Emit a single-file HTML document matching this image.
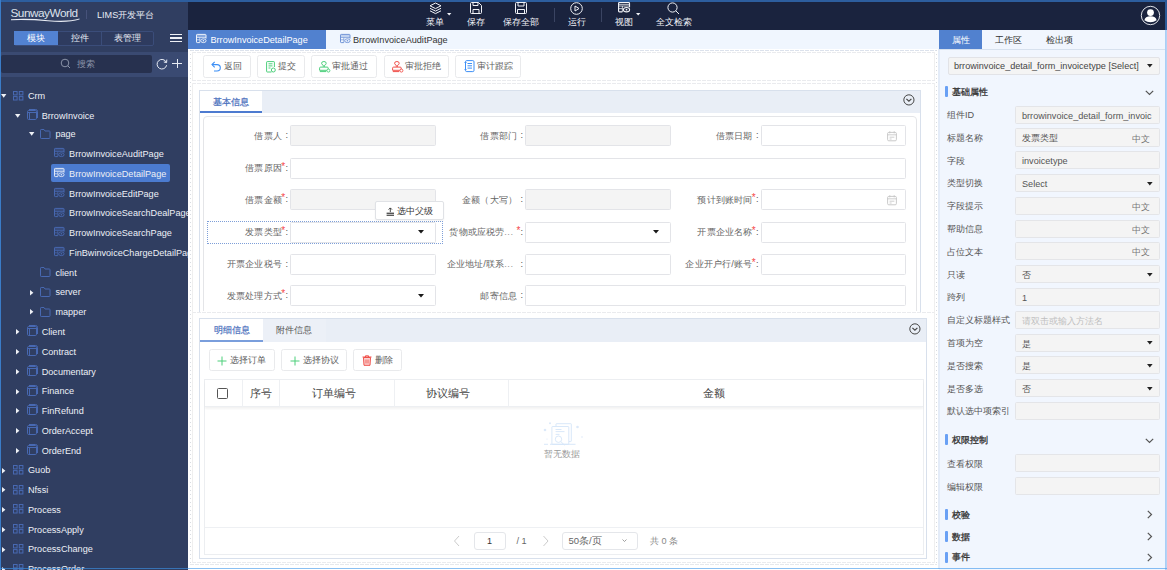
<!DOCTYPE html><html><head><meta charset="utf-8"><style>
*{box-sizing:border-box;margin:0;padding:0}
html,body{width:1167px;height:570px;overflow:hidden;background:#fff;font-family:"Liberation Sans",sans-serif;font-size:9.12px;color:#333}
.a{position:absolute}
.nw{white-space:nowrap}
svg{position:absolute;overflow:visible}
</style></head><body><div class="a" style="left:0;top:0;width:188px;height:570px;background:#303e61"></div>
<div class="a" style="left:188px;top:0;width:979px;height:30px;background:#1a233e"></div>
<div class="a nw" style="left:10.5px;top:7px;font-size:11.8px;line-height:13px;color:#dde2ec;letter-spacing:-0.5px">SunwayWorld</div>
<svg style="left:10px;top:17px" width="72" height="6"><path d="M1 2.2 Q20 1.2 38 3.2 Q58 5 69.5 1.6 L69.5 2.6 Q58 6.2 38 4.3 Q20 2.6 1 3.2 Z" fill="#e6eaf2"/></svg>
<div class="a" style="left:85.5px;top:10px;width:1px;height:9px;background:#46527a"></div>
<div class="a nw" style="left:97px;top:9px;font-size:9.12px;color:#e8ecf4">LIMS开发平台</div>
<div class="a" style="left:14px;top:30.5px;width:140px;height:15px;border:1px solid #3b4d7a;border-radius:2px;background:#2e3b5f"></div>
<div class="a" style="left:14px;top:31px;width:44px;height:14px;background:#5282d2"></div>
<div class="a" style="left:100.5px;top:31px;width:1px;height:14px;background:#3b4d7a"></div>
<div class="a nw" style="left:14px;top:31px;width:44px;height:14px;line-height:14px;text-align:center;color:#fff;font-size:9.12px">模块</div>
<div class="a nw" style="left:58px;top:31px;width:43px;height:14px;line-height:14px;text-align:center;color:#e8ecf4;font-size:9.12px">控件</div>
<div class="a nw" style="left:101px;top:31px;width:53px;height:14px;line-height:14px;text-align:center;color:#e8ecf4;font-size:9.12px">表管理</div>
<div class="a" style="left:170px;top:33.5px;width:11.6px;height:1.3px;background:#eef0f5"></div>
<div class="a" style="left:170px;top:37.3px;width:11.6px;height:1.3px;background:#eef0f5"></div>
<div class="a" style="left:170px;top:41.1px;width:11.6px;height:1.3px;background:#eef0f5"></div>
<div class="a" style="left:0;top:51.5px;width:188px;height:25px;background:#3a4a72"></div>
<div class="a" style="left:1px;top:55px;width:151px;height:18px;background:#27314f;border-radius:2px"></div>
<svg style="left:60px;top:58px" width="12" height="12"><circle cx="5" cy="5" r="3.8" stroke="#8a93a8" stroke-width="1" fill="none"/><path d="M7.8 7.8 L10 10" stroke="#8a93a8" stroke-width="1"/></svg>
<div class="a nw" style="left:77px;top:58px;color:#8a93a8;font-size:9.12px">搜索</div>
<svg style="left:156px;top:57.5px" width="12" height="12"><path d="M10.3 4.3 A4.8 4.8 0 1 0 10.6 7.2" stroke="#e8ecf4" stroke-width="1" fill="none"/><path d="M10.8 1.6 L10.6 4.6 L7.8 4" stroke="#e8ecf4" stroke-width="1" fill="none"/></svg>
<div class="a" style="left:176.7px;top:58.8px;width:1px;height:9.6px;background:#e8ecf4"></div>
<div class="a" style="left:172.3px;top:63px;width:9.8px;height:1px;background:#e8ecf4"></div>
<div class="a" style="left:0;top:77px;width:188px;height:493px;overflow:hidden">
<svg style="left:1.40px;top:17.00px" width="6" height="4"><path d="M0 0 H5.4 L2.7 3.7 Z" fill="#eef1f6"/></svg>
<svg style="left:13.0px;top:13.800000000000006px" width="11" height="10"><rect x="0.5" y="0.5" width="3.6" height="3.4" rx="0" stroke="#4869b2" stroke-width="1" fill="none"/><rect x="0.5" y="5.6" width="3.6" height="3.4" rx="0" stroke="#4869b2" stroke-width="1" fill="none"/><rect x="6.3" y="0.5" width="3.6" height="3.4" rx="0" stroke="#4869b2" stroke-width="1" fill="none"/><rect x="6.3" y="5.6" width="3.6" height="3.4" rx="0" stroke="#4869b2" stroke-width="1" fill="none"/></svg>
<div class="a nw" style="left:28.00px;top:13.40px;color:#edf0f6;font-size:9.12px;line-height:12px">Crm</div>
<svg style="left:15.10px;top:36.50px" width="6" height="4"><path d="M0 0 H5.4 L2.7 3.7 Z" fill="#eef1f6"/></svg>
<svg style="left:26.7px;top:32.2px" width="11" height="11"><rect x="0.5" y="1.5" width="9" height="9" rx="1.2" stroke="#4869b2" stroke-width="1" fill="none"/><path d="M0.5 3.5 H9.5 M2.5 3.5 V10.5 M2 0.5 H8.5 Q10.5 0.5 10.5 2.5 V9" stroke="#4869b2" stroke-width="1" fill="none"/></svg>
<div class="a nw" style="left:41.70px;top:32.90px;color:#edf0f6;font-size:9.12px;line-height:12px">BrrowInvoice</div>
<svg style="left:28.80px;top:54.80px" width="6" height="4"><path d="M0 0 H5.4 L2.7 3.7 Z" fill="#eef1f6"/></svg>
<svg style="left:40.4px;top:51.69999999999999px" width="11" height="10"><path d="M0.5 1.2 Q0.5 0.5 1.2 0.5 H4 L5 2 H9.3 Q10 2 10 2.7 V8.8 Q10 9.5 9.3 9.5 H1.2 Q0.5 9.5 0.5 8.8 Z" stroke="#4869b2" stroke-width="1" fill="none"/></svg>
<div class="a nw" style="left:55.40px;top:51.20px;color:#edf0f6;font-size:9.12px;line-height:12px">page</div>
<svg style="left:54.099999999999994px;top:71.175px" width="11" height="10"><path d="M3.8 8.6 H1.2 Q0.5 8.6 0.5 7.9 V1.1 Q0.5 0.4 1.2 0.4 H9.3 Q10 0.4 10 1.1 V4.6" stroke="#4869b2" stroke-width="1" fill="none"/><path d="M0.5 2.0 H10 M0.5 3.5 H10 M3.8 3.5 V8.6 M0.5 5.8 H3.8" stroke="#4869b2" stroke-width="0.7" fill="none"/><ellipse cx="7.4" cy="6.7" rx="2.7" ry="1.9" stroke="#4869b2" stroke-width="0.9" fill="none"/><circle cx="7.4" cy="6.7" r="0.8" fill="#4869b2"/></svg>
<div class="a nw" style="left:69.10px;top:70.97px;color:#edf0f6;font-size:9.12px;line-height:12px">BrrowInvoiceAuditPage</div>
<div class="a" style="left:51px;top:87.30px;width:119px;height:18.2px;background:#4b7bd0;border-radius:2px"></div>
<svg style="left:54.099999999999994px;top:90.95px" width="11" height="10"><path d="M3.8 8.6 H1.2 Q0.5 8.6 0.5 7.9 V1.1 Q0.5 0.4 1.2 0.4 H9.3 Q10 0.4 10 1.1 V4.6" stroke="#e3e9f6" stroke-width="1" fill="none"/><path d="M0.5 2.0 H10 M0.5 3.5 H10 M3.8 3.5 V8.6 M0.5 5.8 H3.8" stroke="#e3e9f6" stroke-width="0.7" fill="none"/><ellipse cx="7.4" cy="6.7" rx="2.7" ry="1.9" stroke="#e3e9f6" stroke-width="0.9" fill="none"/><circle cx="7.4" cy="6.7" r="0.8" fill="#e3e9f6"/></svg>
<div class="a nw" style="left:69.10px;top:90.75px;color:#edf0f6;font-size:9.12px;line-height:12px">BrrowInvoiceDetailPage</div>
<svg style="left:54.099999999999994px;top:110.72499999999998px" width="11" height="10"><path d="M3.8 8.6 H1.2 Q0.5 8.6 0.5 7.9 V1.1 Q0.5 0.4 1.2 0.4 H9.3 Q10 0.4 10 1.1 V4.6" stroke="#4869b2" stroke-width="1" fill="none"/><path d="M0.5 2.0 H10 M0.5 3.5 H10 M3.8 3.5 V8.6 M0.5 5.8 H3.8" stroke="#4869b2" stroke-width="0.7" fill="none"/><ellipse cx="7.4" cy="6.7" rx="2.7" ry="1.9" stroke="#4869b2" stroke-width="0.9" fill="none"/><circle cx="7.4" cy="6.7" r="0.8" fill="#4869b2"/></svg>
<div class="a nw" style="left:69.10px;top:110.52px;color:#edf0f6;font-size:9.12px;line-height:12px">BrrowInvoiceEditPage</div>
<svg style="left:54.099999999999994px;top:130.49999999999997px" width="11" height="10"><path d="M3.8 8.6 H1.2 Q0.5 8.6 0.5 7.9 V1.1 Q0.5 0.4 1.2 0.4 H9.3 Q10 0.4 10 1.1 V4.6" stroke="#4869b2" stroke-width="1" fill="none"/><path d="M0.5 2.0 H10 M0.5 3.5 H10 M3.8 3.5 V8.6 M0.5 5.8 H3.8" stroke="#4869b2" stroke-width="0.7" fill="none"/><ellipse cx="7.4" cy="6.7" rx="2.7" ry="1.9" stroke="#4869b2" stroke-width="0.9" fill="none"/><circle cx="7.4" cy="6.7" r="0.8" fill="#4869b2"/></svg>
<div class="a nw" style="left:69.10px;top:130.30px;color:#edf0f6;font-size:9.12px;line-height:12px">BrrowInvoiceSearchDealPage</div>
<svg style="left:54.099999999999994px;top:150.27499999999998px" width="11" height="10"><path d="M3.8 8.6 H1.2 Q0.5 8.6 0.5 7.9 V1.1 Q0.5 0.4 1.2 0.4 H9.3 Q10 0.4 10 1.1 V4.6" stroke="#4869b2" stroke-width="1" fill="none"/><path d="M0.5 2.0 H10 M0.5 3.5 H10 M3.8 3.5 V8.6 M0.5 5.8 H3.8" stroke="#4869b2" stroke-width="0.7" fill="none"/><ellipse cx="7.4" cy="6.7" rx="2.7" ry="1.9" stroke="#4869b2" stroke-width="0.9" fill="none"/><circle cx="7.4" cy="6.7" r="0.8" fill="#4869b2"/></svg>
<div class="a nw" style="left:69.10px;top:150.07px;color:#edf0f6;font-size:9.12px;line-height:12px">BrrowInvoiceSearchPage</div>
<svg style="left:54.099999999999994px;top:170.04999999999995px" width="11" height="10"><path d="M3.8 8.6 H1.2 Q0.5 8.6 0.5 7.9 V1.1 Q0.5 0.4 1.2 0.4 H9.3 Q10 0.4 10 1.1 V4.6" stroke="#4869b2" stroke-width="1" fill="none"/><path d="M0.5 2.0 H10 M0.5 3.5 H10 M3.8 3.5 V8.6 M0.5 5.8 H3.8" stroke="#4869b2" stroke-width="0.7" fill="none"/><ellipse cx="7.4" cy="6.7" rx="2.7" ry="1.9" stroke="#4869b2" stroke-width="0.9" fill="none"/><circle cx="7.4" cy="6.7" r="0.8" fill="#4869b2"/></svg>
<div class="a nw" style="left:69.10px;top:169.85px;color:#edf0f6;font-size:9.12px;line-height:12px">FinBwinvoiceChargeDetailPage</div>
<svg style="left:40.4px;top:190.125px" width="11" height="10"><path d="M0.5 1.2 Q0.5 0.5 1.2 0.5 H4 L5 2 H9.3 Q10 2 10 2.7 V8.8 Q10 9.5 9.3 9.5 H1.2 Q0.5 9.5 0.5 8.8 Z" stroke="#4869b2" stroke-width="1" fill="none"/></svg>
<div class="a nw" style="left:55.40px;top:189.62px;color:#edf0f6;font-size:9.12px;line-height:12px">client</div>
<svg style="left:29.60px;top:212.70px" width="4" height="6"><path d="M0 0 V5.4 L3.4 2.7 Z" fill="#eef1f6"/></svg>
<svg style="left:40.4px;top:209.89999999999998px" width="11" height="10"><path d="M0.5 1.2 Q0.5 0.5 1.2 0.5 H4 L5 2 H9.3 Q10 2 10 2.7 V8.8 Q10 9.5 9.3 9.5 H1.2 Q0.5 9.5 0.5 8.8 Z" stroke="#4869b2" stroke-width="1" fill="none"/></svg>
<div class="a nw" style="left:55.40px;top:209.40px;color:#edf0f6;font-size:9.12px;line-height:12px">server</div>
<svg style="left:29.60px;top:232.47px" width="4" height="6"><path d="M0 0 V5.4 L3.4 2.7 Z" fill="#eef1f6"/></svg>
<svg style="left:40.4px;top:229.67499999999995px" width="11" height="10"><path d="M0.5 1.2 Q0.5 0.5 1.2 0.5 H4 L5 2 H9.3 Q10 2 10 2.7 V8.8 Q10 9.5 9.3 9.5 H1.2 Q0.5 9.5 0.5 8.8 Z" stroke="#4869b2" stroke-width="1" fill="none"/></svg>
<div class="a nw" style="left:55.40px;top:229.17px;color:#edf0f6;font-size:9.12px;line-height:12px">mapper</div>
<svg style="left:15.90px;top:252.25px" width="4" height="6"><path d="M0 0 V5.4 L3.4 2.7 Z" fill="#eef1f6"/></svg>
<svg style="left:26.7px;top:248.25px" width="11" height="11"><rect x="0.5" y="1.5" width="9" height="9" rx="1.2" stroke="#4869b2" stroke-width="1" fill="none"/><path d="M0.5 3.5 H9.5 M2.5 3.5 V10.5 M2 0.5 H8.5 Q10.5 0.5 10.5 2.5 V9" stroke="#4869b2" stroke-width="1" fill="none"/></svg>
<div class="a nw" style="left:41.70px;top:248.95px;color:#edf0f6;font-size:9.12px;line-height:12px">Client</div>
<svg style="left:15.90px;top:272.02px" width="4" height="6"><path d="M0 0 V5.4 L3.4 2.7 Z" fill="#eef1f6"/></svg>
<svg style="left:26.7px;top:268.025px" width="11" height="11"><rect x="0.5" y="1.5" width="9" height="9" rx="1.2" stroke="#4869b2" stroke-width="1" fill="none"/><path d="M0.5 3.5 H9.5 M2.5 3.5 V10.5 M2 0.5 H8.5 Q10.5 0.5 10.5 2.5 V9" stroke="#4869b2" stroke-width="1" fill="none"/></svg>
<div class="a nw" style="left:41.70px;top:268.72px;color:#edf0f6;font-size:9.12px;line-height:12px">Contract</div>
<svg style="left:15.90px;top:291.80px" width="4" height="6"><path d="M0 0 V5.4 L3.4 2.7 Z" fill="#eef1f6"/></svg>
<svg style="left:26.7px;top:287.8px" width="11" height="11"><rect x="0.5" y="1.5" width="9" height="9" rx="1.2" stroke="#4869b2" stroke-width="1" fill="none"/><path d="M0.5 3.5 H9.5 M2.5 3.5 V10.5 M2 0.5 H8.5 Q10.5 0.5 10.5 2.5 V9" stroke="#4869b2" stroke-width="1" fill="none"/></svg>
<div class="a nw" style="left:41.70px;top:288.50px;color:#edf0f6;font-size:9.12px;line-height:12px">Documentary</div>
<svg style="left:15.90px;top:311.57px" width="4" height="6"><path d="M0 0 V5.4 L3.4 2.7 Z" fill="#eef1f6"/></svg>
<svg style="left:26.7px;top:307.575px" width="11" height="11"><rect x="0.5" y="1.5" width="9" height="9" rx="1.2" stroke="#4869b2" stroke-width="1" fill="none"/><path d="M0.5 3.5 H9.5 M2.5 3.5 V10.5 M2 0.5 H8.5 Q10.5 0.5 10.5 2.5 V9" stroke="#4869b2" stroke-width="1" fill="none"/></svg>
<div class="a nw" style="left:41.70px;top:308.27px;color:#edf0f6;font-size:9.12px;line-height:12px">Finance</div>
<svg style="left:15.90px;top:331.35px" width="4" height="6"><path d="M0 0 V5.4 L3.4 2.7 Z" fill="#eef1f6"/></svg>
<svg style="left:26.7px;top:327.34999999999997px" width="11" height="11"><rect x="0.5" y="1.5" width="9" height="9" rx="1.2" stroke="#4869b2" stroke-width="1" fill="none"/><path d="M0.5 3.5 H9.5 M2.5 3.5 V10.5 M2 0.5 H8.5 Q10.5 0.5 10.5 2.5 V9" stroke="#4869b2" stroke-width="1" fill="none"/></svg>
<div class="a nw" style="left:41.70px;top:328.05px;color:#edf0f6;font-size:9.12px;line-height:12px">FinRefund</div>
<svg style="left:15.90px;top:351.12px" width="4" height="6"><path d="M0 0 V5.4 L3.4 2.7 Z" fill="#eef1f6"/></svg>
<svg style="left:26.7px;top:347.125px" width="11" height="11"><rect x="0.5" y="1.5" width="9" height="9" rx="1.2" stroke="#4869b2" stroke-width="1" fill="none"/><path d="M0.5 3.5 H9.5 M2.5 3.5 V10.5 M2 0.5 H8.5 Q10.5 0.5 10.5 2.5 V9" stroke="#4869b2" stroke-width="1" fill="none"/></svg>
<div class="a nw" style="left:41.70px;top:347.82px;color:#edf0f6;font-size:9.12px;line-height:12px">OrderAccept</div>
<svg style="left:15.90px;top:370.90px" width="4" height="6"><path d="M0 0 V5.4 L3.4 2.7 Z" fill="#eef1f6"/></svg>
<svg style="left:26.7px;top:366.9px" width="11" height="11"><rect x="0.5" y="1.5" width="9" height="9" rx="1.2" stroke="#4869b2" stroke-width="1" fill="none"/><path d="M0.5 3.5 H9.5 M2.5 3.5 V10.5 M2 0.5 H8.5 Q10.5 0.5 10.5 2.5 V9" stroke="#4869b2" stroke-width="1" fill="none"/></svg>
<div class="a nw" style="left:41.70px;top:367.60px;color:#edf0f6;font-size:9.12px;line-height:12px">OrderEnd</div>
<svg style="left:2.20px;top:390.67px" width="4" height="6"><path d="M0 0 V5.4 L3.4 2.7 Z" fill="#eef1f6"/></svg>
<svg style="left:13.0px;top:387.7749999999999px" width="11" height="10"><rect x="0.5" y="0.5" width="3.6" height="3.4" rx="0" stroke="#4869b2" stroke-width="1" fill="none"/><rect x="0.5" y="5.6" width="3.6" height="3.4" rx="0" stroke="#4869b2" stroke-width="1" fill="none"/><rect x="6.3" y="0.5" width="3.6" height="3.4" rx="0" stroke="#4869b2" stroke-width="1" fill="none"/><rect x="6.3" y="5.6" width="3.6" height="3.4" rx="0" stroke="#4869b2" stroke-width="1" fill="none"/></svg>
<div class="a nw" style="left:28.00px;top:387.37px;color:#edf0f6;font-size:9.12px;line-height:12px">Guob</div>
<svg style="left:2.20px;top:410.45px" width="4" height="6"><path d="M0 0 V5.4 L3.4 2.7 Z" fill="#eef1f6"/></svg>
<svg style="left:13.0px;top:407.54999999999995px" width="11" height="10"><rect x="0.5" y="0.5" width="3.6" height="3.4" rx="0" stroke="#4869b2" stroke-width="1" fill="none"/><rect x="0.5" y="5.6" width="3.6" height="3.4" rx="0" stroke="#4869b2" stroke-width="1" fill="none"/><rect x="6.3" y="0.5" width="3.6" height="3.4" rx="0" stroke="#4869b2" stroke-width="1" fill="none"/><rect x="6.3" y="5.6" width="3.6" height="3.4" rx="0" stroke="#4869b2" stroke-width="1" fill="none"/></svg>
<div class="a nw" style="left:28.00px;top:407.15px;color:#edf0f6;font-size:9.12px;line-height:12px">Nfssi</div>
<svg style="left:2.20px;top:430.22px" width="4" height="6"><path d="M0 0 V5.4 L3.4 2.7 Z" fill="#eef1f6"/></svg>
<svg style="left:13.0px;top:427.32499999999993px" width="11" height="10"><rect x="0.5" y="0.5" width="3.6" height="3.4" rx="0" stroke="#4869b2" stroke-width="1" fill="none"/><rect x="0.5" y="5.6" width="3.6" height="3.4" rx="0" stroke="#4869b2" stroke-width="1" fill="none"/><rect x="6.3" y="0.5" width="3.6" height="3.4" rx="0" stroke="#4869b2" stroke-width="1" fill="none"/><rect x="6.3" y="5.6" width="3.6" height="3.4" rx="0" stroke="#4869b2" stroke-width="1" fill="none"/></svg>
<div class="a nw" style="left:28.00px;top:426.92px;color:#edf0f6;font-size:9.12px;line-height:12px">Process</div>
<svg style="left:2.20px;top:450.00px" width="4" height="6"><path d="M0 0 V5.4 L3.4 2.7 Z" fill="#eef1f6"/></svg>
<svg style="left:13.0px;top:447.1px" width="11" height="10"><rect x="0.5" y="0.5" width="3.6" height="3.4" rx="0" stroke="#4869b2" stroke-width="1" fill="none"/><rect x="0.5" y="5.6" width="3.6" height="3.4" rx="0" stroke="#4869b2" stroke-width="1" fill="none"/><rect x="6.3" y="0.5" width="3.6" height="3.4" rx="0" stroke="#4869b2" stroke-width="1" fill="none"/><rect x="6.3" y="5.6" width="3.6" height="3.4" rx="0" stroke="#4869b2" stroke-width="1" fill="none"/></svg>
<div class="a nw" style="left:28.00px;top:446.70px;color:#edf0f6;font-size:9.12px;line-height:12px">ProcessApply</div>
<svg style="left:2.20px;top:469.77px" width="4" height="6"><path d="M0 0 V5.4 L3.4 2.7 Z" fill="#eef1f6"/></svg>
<svg style="left:13.0px;top:466.8749999999999px" width="11" height="10"><rect x="0.5" y="0.5" width="3.6" height="3.4" rx="0" stroke="#4869b2" stroke-width="1" fill="none"/><rect x="0.5" y="5.6" width="3.6" height="3.4" rx="0" stroke="#4869b2" stroke-width="1" fill="none"/><rect x="6.3" y="0.5" width="3.6" height="3.4" rx="0" stroke="#4869b2" stroke-width="1" fill="none"/><rect x="6.3" y="5.6" width="3.6" height="3.4" rx="0" stroke="#4869b2" stroke-width="1" fill="none"/></svg>
<div class="a nw" style="left:28.00px;top:466.47px;color:#edf0f6;font-size:9.12px;line-height:12px">ProcessChange</div>
<svg style="left:2.20px;top:489.55px" width="4" height="6"><path d="M0 0 V5.4 L3.4 2.7 Z" fill="#eef1f6"/></svg>
<svg style="left:13.0px;top:486.65px" width="11" height="10"><rect x="0.5" y="0.5" width="3.6" height="3.4" rx="0" stroke="#4869b2" stroke-width="1" fill="none"/><rect x="0.5" y="5.6" width="3.6" height="3.4" rx="0" stroke="#4869b2" stroke-width="1" fill="none"/><rect x="6.3" y="0.5" width="3.6" height="3.4" rx="0" stroke="#4869b2" stroke-width="1" fill="none"/><rect x="6.3" y="5.6" width="3.6" height="3.4" rx="0" stroke="#4869b2" stroke-width="1" fill="none"/></svg>
<div class="a nw" style="left:28.00px;top:486.25px;color:#edf0f6;font-size:9.12px;line-height:12px">ProcessOrder</div>
</div>
<svg style="left:429px;top:1.5px" width="13" height="13"><path d="M6.5 1 L12 3.8 L6.5 6.6 L1 3.8 Z" stroke="#f0f2f7" stroke-width="1" fill="none"/><path d="M1 6.3 L6.5 9.1 L12 6.3 M1 8.8 L6.5 11.6 L12 8.8" stroke="#f0f2f7" stroke-width="1" fill="none"/></svg>
<div class="a nw" style="left:426px;top:16.5px;color:#f0f2f7;font-size:9.12px;line-height:10px">菜单</div>
<svg style="left:447px;top:13px" width="5" height="4"><path d="M0 0 H4.4 L2.2 2.6 Z" fill="#f0f2f7"/></svg>
<svg style="left:470px;top:2px" width="12" height="12"><path d="M1.5 0.5 H8.5 L11.5 3.5 V10.5 Q11.5 11.5 10.5 11.5 H1.5 Q0.5 11.5 0.5 10.5 V1.5 Q0.5 0.5 1.5 0.5 Z" stroke="#f0f2f7" stroke-width="1" fill="none"/><path d="M3 0.5 V3.5 H8 V0.5 M3 11.5 V7.5 H9 V11.5" stroke="#f0f2f7" stroke-width="1" fill="none"/></svg>
<div class="a nw" style="left:467px;top:16.5px;color:#f0f2f7;font-size:9.12px;line-height:10px">保存</div>
<svg style="left:514.5px;top:2px" width="12" height="12"><rect x="0.5" y="0.5" width="11" height="11" rx="1" stroke="#f0f2f7" stroke-width="1" fill="none"/><path d="M3 0.5 V4 H9 V0.5 M2.5 11.5 V7.5 H9.5 V11.5" stroke="#f0f2f7" stroke-width="1" fill="none"/></svg>
<div class="a nw" style="left:503px;top:16.5px;color:#f0f2f7;font-size:9.12px;line-height:10px">保存全部</div>
<div class="a" style="left:553.5px;top:8px;width:1px;height:14px;background:#3a4462"></div>
<svg style="left:570px;top:1.5px" width="13" height="13"><circle cx="6.5" cy="6.5" r="5.8" stroke="#f0f2f7" stroke-width="1" fill="none"/><path d="M5 4 L9 6.5 L5 9 Z" stroke="#f0f2f7" stroke-width="1" fill="none" stroke-linejoin="round"/></svg>
<div class="a nw" style="left:568px;top:16.5px;color:#f0f2f7;font-size:9.12px;line-height:10px">运行</div>
<div class="a" style="left:600.5px;top:8px;width:1px;height:14px;background:#3a4462"></div>
<svg style="left:618px;top:2px;transform:scale(1.15);transform-origin:0 0" width="11" height="10" ><path d="M3.8 8.6 H1.2 Q0.5 8.6 0.5 7.9 V1.1 Q0.5 0.4 1.2 0.4 H9.3 Q10 0.4 10 1.1 V4.6" stroke="#f0f2f7" stroke-width="1" fill="none"/><path d="M0.5 2.0 H10 M0.5 3.5 H10 M3.8 3.5 V8.6 M0.5 5.8 H3.8" stroke="#f0f2f7" stroke-width="0.7" fill="none"/><ellipse cx="7.4" cy="6.7" rx="2.7" ry="1.9" stroke="#f0f2f7" stroke-width="0.9" fill="none"/><circle cx="7.4" cy="6.7" r="0.8" fill="#f0f2f7"/></svg>
<div class="a nw" style="left:615px;top:16.5px;color:#f0f2f7;font-size:9.12px;line-height:10px">视图</div>
<svg style="left:636px;top:13px" width="5" height="4"><path d="M0 0 H4.4 L2.2 2.6 Z" fill="#f0f2f7"/></svg>
<svg style="left:667px;top:1.5px" width="13" height="13"><circle cx="5.5" cy="5.5" r="4.6" stroke="#f0f2f7" stroke-width="1" fill="none"/><path d="M8.8 8.8 L12 12" stroke="#f0f2f7" stroke-width="1"/></svg>
<div class="a nw" style="left:656px;top:16.5px;color:#f0f2f7;font-size:9.12px;line-height:10px">全文检索</div>
<svg style="left:1140px;top:5px" width="21" height="21"><circle cx="10.5" cy="10.5" r="9.2" stroke="#f4f5f8" stroke-width="0.9" fill="none"/><circle cx="10.5" cy="7.6" r="3.4" fill="#fff"/><path d="M4.4 15.2 Q5 11.3 10.5 11.3 Q16 11.3 16.6 15.2 Q14 17.3 10.5 17.3 Q7 17.3 4.4 15.2 Z" fill="#fff"/></svg>
<div class="a" style="left:188px;top:30px;width:751px;height:19px;background:#f0f6fe"></div>
<div class="a" style="left:188px;top:30px;width:138px;height:18.6px;background:#5181cf"></div>
<svg style="left:196px;top:34.2px" width="11" height="10"><path d="M3.8 8.6 H1.2 Q0.5 8.6 0.5 7.9 V1.1 Q0.5 0.4 1.2 0.4 H9.3 Q10 0.4 10 1.1 V4.6" stroke="#f0f4fb" stroke-width="1" fill="none"/><path d="M0.5 2.0 H10 M0.5 3.5 H10 M3.8 3.5 V8.6 M0.5 5.8 H3.8" stroke="#f0f4fb" stroke-width="0.7" fill="none"/><ellipse cx="7.4" cy="6.7" rx="2.7" ry="1.9" stroke="#f0f4fb" stroke-width="0.9" fill="none"/><circle cx="7.4" cy="6.7" r="0.8" fill="#f0f4fb"/></svg>
<div class="a nw" style="left:210.5px;top:34.5px;color:#fff;font-size:9.12px;line-height:11px">BrrowInvoiceDetailPage</div>
<svg style="left:340px;top:34.2px" width="11" height="10"><path d="M3.8 8.6 H1.2 Q0.5 8.6 0.5 7.9 V1.1 Q0.5 0.4 1.2 0.4 H9.3 Q10 0.4 10 1.1 V4.6" stroke="#6f93d6" stroke-width="1" fill="none"/><path d="M0.5 2.0 H10 M0.5 3.5 H10 M3.8 3.5 V8.6 M0.5 5.8 H3.8" stroke="#6f93d6" stroke-width="0.7" fill="none"/><ellipse cx="7.4" cy="6.7" rx="2.7" ry="1.9" stroke="#6f93d6" stroke-width="0.9" fill="none"/><circle cx="7.4" cy="6.7" r="0.8" fill="#6f93d6"/></svg>
<div class="a nw" style="left:353px;top:34.5px;color:#333;font-size:9.12px;line-height:11px">BrrowInvoiceAuditPage</div>
<div class="a" style="left:190px;top:49.8px;width:747px;height:1px;background:repeating-linear-gradient(to right,#dce2ec 0 4px,transparent 4px 5px)"></div>
<div class="a" style="left:190px;top:563.8px;width:747px;height:1px;background:repeating-linear-gradient(to right,#e6e8ec 0 4px,transparent 4px 5px)"></div>
<div class="a" style="left:190px;top:49.8px;width:1px;height:515px;background:repeating-linear-gradient(to bottom,#d9dce1 0 1px,transparent 1px 4px)"></div>
<div class="a" style="left:936px;top:49.8px;width:1px;height:515px;background:repeating-linear-gradient(to bottom,#d9dce1 0 1px,transparent 1px 4px)"></div>
<div class="a" style="left:192px;top:51.8px;width:743px;height:1px;background:repeating-linear-gradient(to right,#eaebee 0 4px,transparent 4px 5px)"></div>
<div class="a" style="left:192px;top:79.8px;width:743px;height:1px;background:repeating-linear-gradient(to right,#eaebee 0 4px,transparent 4px 5px)"></div>
<div class="a" style="left:192px;top:82.8px;width:743px;height:1px;background:repeating-linear-gradient(to right,#eaebee 0 4px,transparent 4px 5px)"></div>
<div class="a" style="left:192px;top:311.5px;width:743px;height:1px;background:repeating-linear-gradient(to right,#eaebee 0 4px,transparent 4px 5px)"></div>
<div class="a" style="left:192px;top:562px;width:743px;height:1px;background:repeating-linear-gradient(to right,#eaebee 0 4px,transparent 4px 5px)"></div>
<div class="a" style="left:192px;top:51.8px;width:1px;height:28px;background:#efefef"></div>
<div class="a" style="left:934px;top:51.8px;width:1px;height:28px;background:#efefef"></div>
<div class="a" style="left:192px;top:82.8px;width:1px;height:480px;background:#efefef"></div>
<div class="a" style="left:934px;top:82.8px;width:1px;height:480px;background:#efefef"></div>
<div class="a" style="left:202.5px;top:55px;width:48px;height:22.5px;border:1px solid #e9eaec;border-radius:2.5px;background:#fff"></div>
<svg style="left:211px;top:60.5px" width="11" height="11"><path d="M3.7 0.9 L1 3.6 L3.7 6.3" stroke="#3d8ff5" stroke-width="1.1" fill="none"/><path d="M1.2 3.6 H6 Q9.3 3.6 9.3 6.8 Q9.3 10 6 10 H3" stroke="#3d8ff5" stroke-width="1.1" fill="none"/></svg>
<div class="a nw" style="left:223.5px;top:60.75px;color:#606060;font-size:9.12px;line-height:11px">返回</div>
<div class="a" style="left:256.5px;top:55px;width:48px;height:22.5px;border:1px solid #e9eaec;border-radius:2.5px;background:#fff"></div>
<svg style="left:265.5px;top:60.5px" width="12" height="12"><path d="M5.5 11 H1.2 Q0.6 11 0.6 10.4 V1.2 Q0.6 0.6 1.2 0.6 H7.8 Q8.4 0.6 8.4 1.2 V6" stroke="#4ccf7b" stroke-width="1" fill="none"/><path d="M2.5 2.8 H6.5 M2.5 4.9 H6.5 M2.5 7 H4.5" stroke="#4ccf7b" stroke-width="1"/><circle cx="7.3" cy="9" r="2" stroke="#4ccf7b" stroke-width="1" fill="#fff"/></svg>
<div class="a nw" style="left:277.5px;top:60.75px;color:#606060;font-size:9.12px;line-height:11px">提交</div>
<div class="a" style="left:310.5px;top:55px;width:66px;height:22.5px;border:1px solid #e9eaec;border-radius:2.5px;background:#fff"></div>
<svg style="left:319.3px;top:60.8px" width="12" height="12"><path d="M4.3 5.8 V4.3 Q2.6 3.6 2.6 2.3 Q2.6 0.5 4.9 0.5 Q7.2 0.5 7.2 2.3 Q7.2 3.6 5.5 4.3 V5.8" stroke="#4ccf7b" stroke-width="1" fill="none"/><path d="M0.6 9.3 V7.1 Q0.6 6.1 1.6 6.1 H8.2 Q9.2 6.1 9.2 7.1 V9.3 Z" stroke="#4ccf7b" stroke-width="1" fill="none"/><path d="M0.8 10.6 H7.2" stroke="#4ccf7b" stroke-width="1"/><circle cx="9.4" cy="9.6" r="1.5" fill="#fff" stroke="#4ccf7b" stroke-width="0.9"/></svg>
<div class="a nw" style="left:332px;top:60.75px;color:#606060;font-size:9.12px;line-height:11px">审批通过</div>
<div class="a" style="left:383.5px;top:55px;width:65px;height:22.5px;border:1px solid #e9eaec;border-radius:2.5px;background:#fff"></div>
<svg style="left:392.3px;top:60.8px" width="12" height="12"><path d="M4.3 5.8 V4.3 Q2.6 3.6 2.6 2.3 Q2.6 0.5 4.9 0.5 Q7.2 0.5 7.2 2.3 Q7.2 3.6 5.5 4.3 V5.8" stroke="#f0504a" stroke-width="1" fill="none"/><path d="M0.6 9.3 V7.1 Q0.6 6.1 1.6 6.1 H8.2 Q9.2 6.1 9.2 7.1 V9.3 Z" stroke="#f0504a" stroke-width="1" fill="none"/><path d="M0.8 10.6 H7.2" stroke="#f0504a" stroke-width="1"/><circle cx="9.4" cy="9.6" r="1.5" fill="#fff" stroke="#f0504a" stroke-width="0.9"/></svg>
<div class="a nw" style="left:405px;top:60.75px;color:#606060;font-size:9.12px;line-height:11px">审批拒绝</div>
<div class="a" style="left:455.2px;top:55px;width:66px;height:22.5px;border:1px solid #e9eaec;border-radius:2.5px;background:#fff"></div>
<svg style="left:464px;top:59.5px" width="11" height="13"><rect x="1.5" y="0.6" width="8.5" height="11" rx="1.2" stroke="#3d8ff5" stroke-width="1" fill="none"/><path d="M3.5 3.5 H8 M3.5 5.8 H8 M3.5 8.1 H8 M0.5 2.5 H2.5 M0.5 9.6 H2.5" stroke="#3d8ff5" stroke-width="1"/></svg>
<div class="a nw" style="left:477px;top:60.75px;color:#606060;font-size:9.12px;line-height:11px">审计跟踪</div>
<div class="a" style="left:199px;top:90px;width:722px;height:222px;border:1px solid #d8e0ec;border-bottom:none;overflow:hidden"></div>
<div class="a" style="left:200px;top:91px;width:720px;height:22px;background:#e9eef6"></div>
<div class="a" style="left:200px;top:91px;width:62px;height:22px;background:#fff;border-bottom:2px solid #4d7bd0"></div>
<div class="a nw" style="left:213px;top:96.8px;color:#4a70bd;font-size:9.12px;line-height:11px;-webkit-text-stroke:0.25px #4a70bd">基本信息</div>
<svg style="left:903px;top:93.8px" width="12" height="12"><circle cx="5.9" cy="5.9" r="5.1" stroke="#444" stroke-width="1" fill="none"/><path d="M3.4 4.9 L5.9 7.2 L8.4 4.9" stroke="#444" stroke-width="1.2" fill="none"/></svg>
<div class="a" style="left:203.3px;top:116px;width:714px;height:195px;overflow:hidden"><div style="position:absolute;left:0;top:0;width:714px;height:260px;border:1px solid #e4e5e8;border-radius:4px"></div></div>
<div class="a nw" style="left:81.90px;top:129.80px;width:200px;text-align:right;color:#666;font-size:9.4px;line-height:12px;letter-spacing:0.15px;margin-right:-0.15px">借票人</div>
<div class="a nw" style="left:285.50px;top:130.30px;color:#555;font-size:9.12px;line-height:11px">:</div>
<div class="a" style="left:290.3px;top:125.3px;width:145.5px;height:21px;border:1px solid #e3e4e8;border-radius:1.5px;background:#f4f4f4"></div>
<div class="a nw" style="left:317.00px;top:129.80px;width:200px;text-align:right;color:#666;font-size:9.4px;line-height:12px;letter-spacing:0.15px;margin-right:-0.15px">借票部门</div>
<div class="a nw" style="left:520.60px;top:130.30px;color:#555;font-size:9.12px;line-height:11px">:</div>
<div class="a" style="left:525.4px;top:125.3px;width:145.4px;height:21px;border:1px solid #e3e4e8;border-radius:1.5px;background:#f4f4f4"></div>
<div class="a nw" style="left:552.30px;top:129.80px;width:200px;text-align:right;color:#666;font-size:9.4px;line-height:12px;letter-spacing:0.15px;margin-right:-0.15px">借票日期</div>
<div class="a nw" style="left:755.90px;top:130.30px;color:#555;font-size:9.12px;line-height:11px">:</div>
<div class="a" style="left:760.7px;top:125.3px;width:145.8px;height:21px;border:1px solid #e3e4e8;border-radius:1.5px;background:#fff"></div>
<svg style="left:887.00px;top:131.10px" width="11" height="11"><rect x="0.6" y="1.4" width="8.8" height="8.4" rx="1.2" stroke="#c4c4c4" stroke-width="0.9" fill="none"/><path d="M0.6 3.8 H9.4 M2.8 0.2 V2.4 M7.2 0.2 V2.4 M2.6 6.2 H7.4 M2.6 8 H4.6" stroke="#c4c4c4" stroke-width="0.8"/></svg>
<div class="a nw" style="left:81.90px;top:162.00px;width:200px;text-align:right;color:#666;font-size:9.4px;line-height:12px;letter-spacing:0.15px;margin-right:-0.15px">借票原因</div>
<div class="a nw" style="left:281.30px;top:161.50px;color:#f5474a;font-size:10px;line-height:10px">*</div>
<div class="a nw" style="left:285.50px;top:162.50px;color:#555;font-size:9.12px;line-height:11px">:</div>
<div class="a" style="left:290.3px;top:157.5px;width:616.2px;height:21px;border:1px solid #e3e4e8;border-radius:1.5px;background:#fff"></div>
<div class="a nw" style="left:81.90px;top:193.80px;width:200px;text-align:right;color:#666;font-size:9.4px;line-height:12px;letter-spacing:0.15px;margin-right:-0.15px">借票金额</div>
<div class="a nw" style="left:281.30px;top:193.30px;color:#f5474a;font-size:10px;line-height:10px">*</div>
<div class="a nw" style="left:285.50px;top:194.30px;color:#555;font-size:9.12px;line-height:11px">:</div>
<div class="a" style="left:290.3px;top:189.3px;width:145.5px;height:21px;border:1px solid #e3e4e8;border-radius:1.5px;background:#f4f4f4"></div>
<div class="a nw" style="left:317.00px;top:193.80px;width:200px;text-align:right;color:#666;font-size:9.4px;line-height:12px;letter-spacing:0.15px;margin-right:-0.15px">金额（大写）</div>
<div class="a nw" style="left:520.60px;top:194.30px;color:#555;font-size:9.12px;line-height:11px">:</div>
<div class="a" style="left:525.4px;top:189.3px;width:145.4px;height:21px;border:1px solid #e3e4e8;border-radius:1.5px;background:#f4f4f4"></div>
<div class="a nw" style="left:552.30px;top:193.80px;width:200px;text-align:right;color:#666;font-size:9.4px;line-height:12px;letter-spacing:0.15px;margin-right:-0.15px">预计到账时间</div>
<div class="a nw" style="left:751.70px;top:193.30px;color:#f5474a;font-size:10px;line-height:10px">*</div>
<div class="a nw" style="left:755.90px;top:194.30px;color:#555;font-size:9.12px;line-height:11px">:</div>
<div class="a" style="left:760.7px;top:189.3px;width:145.8px;height:21px;border:1px solid #e3e4e8;border-radius:1.5px;background:#fff"></div>
<svg style="left:887.00px;top:195.10px" width="11" height="11"><rect x="0.6" y="1.4" width="8.8" height="8.4" rx="1.2" stroke="#c4c4c4" stroke-width="0.9" fill="none"/><path d="M0.6 3.8 H9.4 M2.8 0.2 V2.4 M7.2 0.2 V2.4 M2.6 6.2 H7.4 M2.6 8 H4.6" stroke="#c4c4c4" stroke-width="0.8"/></svg>
<div class="a nw" style="left:81.90px;top:226.10px;width:200px;text-align:right;color:#666;font-size:9.4px;line-height:12px;letter-spacing:0.15px;margin-right:-0.15px">发票类型</div>
<div class="a nw" style="left:281.30px;top:225.60px;color:#f5474a;font-size:10px;line-height:10px">*</div>
<div class="a nw" style="left:285.50px;top:226.60px;color:#555;font-size:9.12px;line-height:11px">:</div>
<div class="a" style="left:290.3px;top:221.6px;width:145.5px;height:21px;border:1px solid #e3e4e8;border-radius:1.5px;background:#fff"></div>
<svg style="left:417.50px;top:229.80px" width="7" height="4"><path d="M0 0 H6 L3 3.4 Z" fill="#1a1a1a"/></svg>
<div class="a nw" style="left:313.10px;top:226.10px;width:200px;text-align:right;color:#666;font-size:9.4px;line-height:12px;letter-spacing:0.15px">货物或应税劳<span style="color:#999;letter-spacing:0.5px;margin-right:-0.5px">...</span></div>
<div class="a nw" style="left:516.40px;top:225.60px;color:#f5474a;font-size:10px;line-height:10px">*</div>
<div class="a nw" style="left:520.60px;top:226.60px;color:#555;font-size:9.12px;line-height:11px">:</div>
<div class="a" style="left:525.4px;top:221.6px;width:145.4px;height:21px;border:1px solid #e3e4e8;border-radius:1.5px;background:#fff"></div>
<svg style="left:652.50px;top:229.80px" width="7" height="4"><path d="M0 0 H6 L3 3.4 Z" fill="#1a1a1a"/></svg>
<div class="a nw" style="left:552.30px;top:226.10px;width:200px;text-align:right;color:#666;font-size:9.4px;line-height:12px;letter-spacing:0.15px;margin-right:-0.15px">开票企业名称</div>
<div class="a nw" style="left:751.70px;top:225.60px;color:#f5474a;font-size:10px;line-height:10px">*</div>
<div class="a nw" style="left:755.90px;top:226.60px;color:#555;font-size:9.12px;line-height:11px">:</div>
<div class="a" style="left:760.7px;top:221.6px;width:145.8px;height:21px;border:1px solid #e3e4e8;border-radius:1.5px;background:#fff"></div>
<div class="a nw" style="left:81.90px;top:258.00px;width:200px;text-align:right;color:#666;font-size:9.4px;line-height:12px;letter-spacing:0.15px;margin-right:-0.15px">开票企业税号</div>
<div class="a nw" style="left:285.50px;top:258.50px;color:#555;font-size:9.12px;line-height:11px">:</div>
<div class="a" style="left:290.3px;top:253.5px;width:145.5px;height:21px;border:1px solid #e3e4e8;border-radius:1.5px;background:#fff"></div>
<div class="a nw" style="left:313.10px;top:258.00px;width:200px;text-align:right;color:#666;font-size:9.4px;line-height:12px;letter-spacing:0.15px">企业地址/联系<span style="color:#999;letter-spacing:0.5px;margin-right:-0.5px">...</span></div>
<div class="a nw" style="left:520.60px;top:258.50px;color:#555;font-size:9.12px;line-height:11px">:</div>
<div class="a" style="left:525.4px;top:253.5px;width:145.4px;height:21px;border:1px solid #e3e4e8;border-radius:1.5px;background:#fff"></div>
<div class="a nw" style="left:552.30px;top:258.00px;width:200px;text-align:right;color:#666;font-size:9.4px;line-height:12px;letter-spacing:0.15px;margin-right:-0.15px">企业开户行/账号</div>
<div class="a nw" style="left:751.70px;top:257.50px;color:#f5474a;font-size:10px;line-height:10px">*</div>
<div class="a nw" style="left:755.90px;top:258.50px;color:#555;font-size:9.12px;line-height:11px">:</div>
<div class="a" style="left:760.7px;top:253.5px;width:145.8px;height:21px;border:1px solid #e3e4e8;border-radius:1.5px;background:#fff"></div>
<div class="a nw" style="left:81.90px;top:289.90px;width:200px;text-align:right;color:#666;font-size:9.4px;line-height:12px;letter-spacing:0.15px;margin-right:-0.15px">发票处理方式</div>
<div class="a nw" style="left:281.30px;top:289.40px;color:#f5474a;font-size:10px;line-height:10px">*</div>
<div class="a nw" style="left:285.50px;top:290.40px;color:#555;font-size:9.12px;line-height:11px">:</div>
<div class="a" style="left:290.3px;top:285.4px;width:145.5px;height:21px;border:1px solid #e3e4e8;border-radius:1.5px;background:#fff"></div>
<svg style="left:417.50px;top:293.60px" width="7" height="4"><path d="M0 0 H6 L3 3.4 Z" fill="#1a1a1a"/></svg>
<div class="a nw" style="left:317.00px;top:289.90px;width:200px;text-align:right;color:#666;font-size:9.4px;line-height:12px;letter-spacing:0.15px;margin-right:-0.15px">邮寄信息</div>
<div class="a nw" style="left:520.60px;top:290.40px;color:#555;font-size:9.12px;line-height:11px">:</div>
<div class="a" style="left:525.4px;top:285.4px;width:381.1px;height:21px;border:1px solid #e3e4e8;border-radius:1.5px;background:#fff"></div>
<div class="a" style="left:207px;top:221px;width:235.5px;height:22.5px;border:1px dotted #7e9fd8"></div>
<div class="a" style="left:375px;top:201px;width:68.5px;height:19px;border:1px solid #e0e2e6;border-radius:2px;background:#fff;box-shadow:0 1px 2px rgba(0,0,0,0.05)"></div>
<svg style="left:385.5px;top:206.5px" width="9" height="10"><path d="M2.6 2.6 L4.3 0.9 L6 2.6 M4.3 1 V5.2" stroke="#333" stroke-width="0.9" fill="none"/><path d="M0.6 5.6 H8 V7.3 H0.6 Z" fill="#555"/><path d="M0.6 8.4 H8" stroke="#333" stroke-width="0.9"/></svg>
<div class="a nw" style="left:396.5px;top:205.2px;color:#333;font-size:9.4px;line-height:11px">选中父级</div>
<div class="a" style="left:199px;top:318px;width:728px;height:240.5px;border:1px solid #d8e0ec"></div>
<div class="a" style="left:200px;top:319px;width:726px;height:22.5px;background:#e9eef6"></div>
<div class="a" style="left:262.5px;top:319px;width:63px;height:22.5px;background:#ecf0f7"></div>
<div class="a" style="left:200px;top:319px;width:62.5px;height:22.5px;background:#fff;border-bottom:2px solid #7a9edc"></div>
<div class="a nw" style="left:213.5px;top:325.3px;color:#4a70bd;font-size:9.12px;line-height:11px;-webkit-text-stroke:0.2px #4a70bd">明细信息</div>
<div class="a nw" style="left:275.5px;top:325.3px;color:#555;font-size:9.12px;line-height:11px">附件信息</div>
<svg style="left:909.1px;top:322.8px" width="12" height="12"><circle cx="5.9" cy="5.9" r="5.1" stroke="#444" stroke-width="1" fill="none"/><path d="M3.4 4.9 L5.9 7.2 L8.4 4.9" stroke="#444" stroke-width="1.2" fill="none"/></svg>
<div class="a" style="left:208.5px;top:349.2px;width:66px;height:22.2px;border:1px solid #e9eaec;border-radius:2.5px;background:#fff"></div>
<svg style="left:217px;top:356px" width="10" height="10"><path d="M5 0.5 V9.5 M0.5 5 H9.5" stroke="#4ccf7b" stroke-width="1"/></svg>
<div class="a nw" style="left:230px;top:354.80px;color:#606060;font-size:9.12px;line-height:11px">选择订单</div>
<div class="a" style="left:281px;top:349.2px;width:66px;height:22.2px;border:1px solid #e9eaec;border-radius:2.5px;background:#fff"></div>
<svg style="left:290px;top:356px" width="10" height="10"><path d="M5 0.5 V9.5 M0.5 5 H9.5" stroke="#4ccf7b" stroke-width="1"/></svg>
<div class="a nw" style="left:303px;top:354.80px;color:#606060;font-size:9.12px;line-height:11px">选择协议</div>
<div class="a" style="left:353px;top:349.2px;width:48.5px;height:22.2px;border:1px solid #e9eaec;border-radius:2.5px;background:#fff"></div>
<svg style="left:362px;top:355px" width="10" height="11"><path d="M0.5 2 H9.5 M3.5 2 V0.8 H6.5 V2" stroke="#f0504a" stroke-width="1" fill="none"/><path d="M1.5 2.5 H8.5 L8 10.3 H2 Z" fill="#f0504a" fill-opacity="0.25" stroke="#f0504a" stroke-width="1"/><path d="M4 4.5 V8.5 M6 4.5 V8.5" stroke="#f0504a" stroke-width="0.9"/></svg>
<div class="a nw" style="left:375px;top:354.80px;color:#606060;font-size:9.12px;line-height:11px">删除</div>
<div class="a" style="left:203.5px;top:379px;width:720px;height:176px;border:1px solid #eceef1"></div>
<div class="a" style="left:204.5px;top:380px;width:718px;height:26.5px;background:#fff;box-shadow:0 1.5px 2px rgba(0,0,0,0.05);border-bottom:1px solid #edeff2"></div>
<div class="a" style="left:242px;top:380px;width:1px;height:26.5px;background:#eef0f3"></div>
<div class="a" style="left:279px;top:380px;width:1px;height:26.5px;background:#eef0f3"></div>
<div class="a" style="left:394.2px;top:380px;width:1px;height:26.5px;background:#eef0f3"></div>
<div class="a" style="left:508px;top:380px;width:1px;height:26.5px;background:#eef0f3"></div>
<div class="a" style="left:217px;top:388px;width:11px;height:11px;border:1px solid #555;border-radius:1.5px"></div>
<div class="a nw" style="left:242px;top:386.5px;width:37px;text-align:center;color:#444;font-size:10.64px;line-height:13px">序号</div>
<div class="a nw" style="left:276px;top:386.5px;width:115px;text-align:center;color:#444;font-size:10.64px;line-height:13px">订单编号</div>
<div class="a nw" style="left:391px;top:386.5px;width:114px;text-align:center;color:#444;font-size:10.64px;line-height:13px">协议编号</div>
<div class="a nw" style="left:507px;top:386.5px;width:413px;text-align:center;color:#444;font-size:10.64px;line-height:13px">金额</div>
<svg style="left:540px;top:418px" width="46" height="30"><g transform="translate(-540,-418)" fill="none" stroke="#d5e5f8" stroke-width="0.9"><path d="M556 426 V424.2 Q556 423.7 556.5 423.7 H570.8 Q571.3 423.7 571.3 424.2 V441 Q571.3 441.5 570.8 441.5 H569"/><path d="M552.4 426.5 H568.3 Q568.8 426.5 568.8 427 V443.8 Q568.8 444.3 568.3 444.3 H552.4 Q551.9 444.3 551.9 443.8 V427 Q551.9 426.5 552.4 426.5 Z" fill="#fff"/><path d="M555.6 429.5 H561.5 M555.6 431.6 H564.5 M555.6 434.4 H559.5"/><circle cx="558.5" cy="439.2" r="3.2" fill="#fff"/><path d="M560.8 441.6 L564.6 445.2"/><path d="M544 444.3 H548 M550 444.3 H575.5"/></g><g fill="#dce9f9" transform="translate(-540,-418)"><circle cx="550" cy="423.2" r="1"/><circle cx="545" cy="430" r="1.3"/><circle cx="577.5" cy="427" r="1.3"/><circle cx="582" cy="437" r="0.8"/><circle cx="547" cy="439" r="0.6"/></g></svg>
<div class="a nw" style="left:543.5px;top:449px;color:#999;font-size:9.12px;line-height:11px">暂无数据</div>
<div class="a" style="left:204.5px;top:526.8px;width:718px;height:1px;background:#eef0f3"></div>
<svg style="left:453px;top:535px" width="8" height="12"><path d="M6 1 L1.5 6 L6 11" stroke="#ccc" stroke-width="1" fill="none"/></svg>
<div class="a" style="left:473.5px;top:531.5px;width:32px;height:18px;border:1px solid #e4e6ea;border-radius:3px"></div>
<div class="a nw" style="left:473.5px;top:535.5px;width:32px;text-align:center;color:#333;font-size:9.12px;line-height:11px">1</div>
<div class="a nw" style="left:516.5px;top:535.5px;color:#666;font-size:9.12px;line-height:11px">/ 1</div>
<svg style="left:542px;top:535px" width="8" height="12"><path d="M1.5 1 L6 6 L1.5 11" stroke="#ccc" stroke-width="1" fill="none"/></svg>
<div class="a" style="left:561.5px;top:531.5px;width:76px;height:18px;border:1px solid #e4e6ea;border-radius:3px"></div>
<div class="a nw" style="left:568.5px;top:535.3px;color:#666;font-size:9.5px;line-height:11px">50条/页</div>
<svg style="left:621.5px;top:539px" width="5" height="4"><path d="M0.5 0.5 L2.5 2.5 L4.5 0.5" stroke="#888" stroke-width="0.8" fill="none"/></svg>
<div class="a nw" style="left:650px;top:535.5px;color:#888;font-size:9.12px;line-height:11px">共 0 条</div>
<div class="a" style="left:938.5px;top:30px;width:227px;height:540px;background:#f1f6fe"></div>
<div class="a" style="left:938px;top:49px;width:2px;height:520px;background:#e4ecf8"></div>
<div class="a" style="left:939px;top:49px;width:226px;height:1px;background:#d7e1ee"></div>
<div class="a" style="left:939px;top:30px;width:43px;height:19px;background:#5181cf"></div>
<div class="a nw" style="left:939px;top:34.5px;width:43px;text-align:center;color:#fff;font-size:9.12px;line-height:11px">属性</div>
<div class="a nw" style="left:994.5px;top:34.5px;color:#333;font-size:9.12px;line-height:11px">工作区</div>
<div class="a nw" style="left:1046px;top:34.5px;color:#333;font-size:9.12px;line-height:11px">检出项</div>
<div class="a" style="left:947.5px;top:56.5px;width:212px;height:18px;border:1px solid #e2e3e7;border-radius:2px;background:#f4f4f4"></div>
<div class="a nw" style="left:954px;top:60.6px;color:#444;font-size:9.12px;line-height:11px">brrowinvoice_detail_form_invoicetype [Select]</div>
<svg style="left:1147px;top:63.5px" width="6" height="4"><path d="M0 0 H5.6 L2.8 3.4 Z" fill="#222"/></svg>
<div class="a" style="left:945px;top:86.10px;width:3px;height:11px;background:#69a0f4;border-radius:1px"></div>
<div class="a nw" style="left:952px;top:87.00px;color:#333;font-size:9.12px;line-height:11px;-webkit-text-stroke:0.3px #333">基础属性</div>
<svg style="left:1145px;top:89.60px" width="9" height="6"><path d="M0.8 0.8 L4.5 4.5 L8.2 0.8" stroke="#555" stroke-width="1.2" fill="none"/></svg>
<div class="a nw" style="left:947px;top:110.00px;color:#555;font-size:9.12px;line-height:11px">组件ID</div>
<div class="a" style="left:1015px;top:105.50px;width:144.5px;height:18.2px;border:1px solid #e4e5e8;border-radius:1.5px;background:#f4f4f4"></div>
<div class="a nw" style="left:1022px;top:110.50px;color:#555;font-size:9.12px;line-height:11px">brrowinvoice_detail_form_invoic</div>
<div class="a nw" style="left:947px;top:132.90px;color:#555;font-size:9.12px;line-height:11px">标题名称</div>
<div class="a" style="left:1015px;top:128.40px;width:144.5px;height:18.2px;border:1px solid #e4e5e8;border-radius:1.5px;background:#f4f4f4"></div>
<div class="a nw" style="left:1022px;top:133.40px;color:#555;font-size:9.12px;line-height:11px">发票类型</div>
<div class="a nw" style="left:1132px;top:133.50px;color:#777;font-size:9.12px;line-height:11px">中文</div>
<div class="a nw" style="left:947px;top:155.70px;color:#555;font-size:9.12px;line-height:11px">字段</div>
<div class="a" style="left:1015px;top:151.20px;width:144.5px;height:18.2px;border:1px solid #e4e5e8;border-radius:1.5px;background:#f4f4f4"></div>
<div class="a nw" style="left:1022px;top:156.20px;color:#555;font-size:9.12px;line-height:11px">invoicetype</div>
<div class="a nw" style="left:947px;top:178.40px;color:#555;font-size:9.12px;line-height:11px">类型切换</div>
<div class="a" style="left:1015px;top:173.90px;width:144.5px;height:18.2px;border:1px solid #e4e5e8;border-radius:1.5px;background:#f4f4f4"></div>
<div class="a nw" style="left:1022px;top:178.90px;color:#555;font-size:9.12px;line-height:11px">Select</div>
<svg style="left:1147px;top:181.60px" width="6" height="4"><path d="M0 0 H5.6 L2.8 3.4 Z" fill="#222"/></svg>
<div class="a nw" style="left:947px;top:201.20px;color:#555;font-size:9.12px;line-height:11px">字段提示</div>
<div class="a" style="left:1015px;top:196.70px;width:144.5px;height:18.2px;border:1px solid #e4e5e8;border-radius:1.5px;background:#f4f4f4"></div>
<div class="a nw" style="left:1132px;top:201.80px;color:#777;font-size:9.12px;line-height:11px">中文</div>
<div class="a nw" style="left:947px;top:224.00px;color:#555;font-size:9.12px;line-height:11px">帮助信息</div>
<div class="a" style="left:1015px;top:219.50px;width:144.5px;height:18.2px;border:1px solid #e4e5e8;border-radius:1.5px;background:#f4f4f4"></div>
<div class="a nw" style="left:1132px;top:224.60px;color:#777;font-size:9.12px;line-height:11px">中文</div>
<div class="a nw" style="left:947px;top:246.80px;color:#555;font-size:9.12px;line-height:11px">占位文本</div>
<div class="a" style="left:1015px;top:242.30px;width:144.5px;height:18.2px;border:1px solid #e4e5e8;border-radius:1.5px;background:#f4f4f4"></div>
<div class="a nw" style="left:1132px;top:247.40px;color:#777;font-size:9.12px;line-height:11px">中文</div>
<div class="a nw" style="left:947px;top:269.60px;color:#555;font-size:9.12px;line-height:11px">只读</div>
<div class="a" style="left:1015px;top:265.10px;width:144.5px;height:18.2px;border:1px solid #e4e5e8;border-radius:1.5px;background:#f4f4f4"></div>
<div class="a nw" style="left:1022px;top:270.10px;color:#555;font-size:9.12px;line-height:11px">否</div>
<svg style="left:1147px;top:272.80px" width="6" height="4"><path d="M0 0 H5.6 L2.8 3.4 Z" fill="#222"/></svg>
<div class="a nw" style="left:947px;top:292.40px;color:#555;font-size:9.12px;line-height:11px">跨列</div>
<div class="a" style="left:1015px;top:287.90px;width:144.5px;height:18.2px;border:1px solid #e4e5e8;border-radius:1.5px;background:#f4f4f4"></div>
<div class="a nw" style="left:1022px;top:292.90px;color:#555;font-size:9.12px;line-height:11px">1</div>
<div class="a nw" style="left:947px;top:315.20px;color:#555;font-size:9.12px;line-height:11px">自定义标题样式</div>
<div class="a" style="left:1015px;top:310.70px;width:144.5px;height:18.2px;border:1px solid #e4e5e8;border-radius:1.5px;background:#f4f4f4"></div>
<div class="a nw" style="left:1022px;top:315.70px;color:#c0c0c0;font-size:9.12px;line-height:11px">请双击或输入方法名</div>
<div class="a nw" style="left:947px;top:338.00px;color:#555;font-size:9.12px;line-height:11px">首项为空</div>
<div class="a" style="left:1015px;top:333.50px;width:144.5px;height:18.2px;border:1px solid #e4e5e8;border-radius:1.5px;background:#f4f4f4"></div>
<div class="a nw" style="left:1022px;top:338.50px;color:#555;font-size:9.12px;line-height:11px">是</div>
<svg style="left:1147px;top:341.20px" width="6" height="4"><path d="M0 0 H5.6 L2.8 3.4 Z" fill="#222"/></svg>
<div class="a nw" style="left:947px;top:360.80px;color:#555;font-size:9.12px;line-height:11px">是否搜索</div>
<div class="a" style="left:1015px;top:356.30px;width:144.5px;height:18.2px;border:1px solid #e4e5e8;border-radius:1.5px;background:#f4f4f4"></div>
<div class="a nw" style="left:1022px;top:361.30px;color:#555;font-size:9.12px;line-height:11px">是</div>
<svg style="left:1147px;top:364.00px" width="6" height="4"><path d="M0 0 H5.6 L2.8 3.4 Z" fill="#222"/></svg>
<div class="a nw" style="left:947px;top:383.60px;color:#555;font-size:9.12px;line-height:11px">是否多选</div>
<div class="a" style="left:1015px;top:379.10px;width:144.5px;height:18.2px;border:1px solid #e4e5e8;border-radius:1.5px;background:#f4f4f4"></div>
<div class="a nw" style="left:1022px;top:384.10px;color:#555;font-size:9.12px;line-height:11px">否</div>
<svg style="left:1147px;top:386.80px" width="6" height="4"><path d="M0 0 H5.6 L2.8 3.4 Z" fill="#222"/></svg>
<div class="a nw" style="left:947px;top:406.40px;color:#555;font-size:9.12px;line-height:11px">默认选中项索引</div>
<div class="a" style="left:1015px;top:401.90px;width:144.5px;height:18.2px;border:1px solid #e4e5e8;border-radius:1.5px;background:#f4f4f4"></div>
<div class="a" style="left:945px;top:434.20px;width:3px;height:11px;background:#69a0f4;border-radius:1px"></div>
<div class="a nw" style="left:952px;top:435.10px;color:#333;font-size:9.12px;line-height:11px;-webkit-text-stroke:0.3px #333">权限控制</div>
<svg style="left:1145px;top:437.70px" width="9" height="6"><path d="M0.8 0.8 L4.5 4.5 L8.2 0.8" stroke="#555" stroke-width="1.2" fill="none"/></svg>
<div class="a nw" style="left:947px;top:458.60px;color:#555;font-size:9.12px;line-height:11px">查看权限</div>
<div class="a" style="left:1015px;top:454.10px;width:144.5px;height:18.2px;border:1px solid #e4e5e8;border-radius:1.5px;background:#f4f4f4"></div>
<div class="a nw" style="left:947px;top:481.50px;color:#555;font-size:9.12px;line-height:11px">编辑权限</div>
<div class="a" style="left:1015px;top:477.00px;width:144.5px;height:18.2px;border:1px solid #e4e5e8;border-radius:1.5px;background:#f4f4f4"></div>
<div class="a" style="left:945px;top:509.20px;width:3px;height:11px;background:#69a0f4;border-radius:1px"></div>
<div class="a nw" style="left:952px;top:510.10px;color:#333;font-size:9.12px;line-height:11px;-webkit-text-stroke:0.3px #333">校验</div>
<svg style="left:1147px;top:510.20px" width="6" height="9"><path d="M0.8 0.8 L4.5 4.5 L0.8 8.2" stroke="#555" stroke-width="1.2" fill="none"/></svg>
<div class="a" style="left:945px;top:530.60px;width:3px;height:11px;background:#69a0f4;border-radius:1px"></div>
<div class="a nw" style="left:952px;top:531.50px;color:#333;font-size:9.12px;line-height:11px;-webkit-text-stroke:0.3px #333">数据</div>
<svg style="left:1147px;top:531.60px" width="6" height="9"><path d="M0.8 0.8 L4.5 4.5 L0.8 8.2" stroke="#555" stroke-width="1.2" fill="none"/></svg>
<div class="a" style="left:945px;top:551.50px;width:3px;height:11px;background:#69a0f4;border-radius:1px"></div>
<div class="a nw" style="left:952px;top:552.40px;color:#333;font-size:9.12px;line-height:11px;-webkit-text-stroke:0.3px #333">事件</div>
<svg style="left:1147px;top:552.50px" width="6" height="9"><path d="M0.8 0.8 L4.5 4.5 L0.8 8.2" stroke="#555" stroke-width="1.2" fill="none"/></svg>
<div class="a" style="left:0;top:0;width:1167px;height:1.5px;background:#2d5e9e"></div>
<div class="a" style="left:0;top:0;width:1px;height:570px;background:#3a7cc8"></div>
<div class="a" style="left:1165px;top:0;width:2px;height:30px;background:#2c5a98"></div>
<div class="a" style="left:1165px;top:30px;width:2px;height:540px;background:linear-gradient(to right,#a6cbf4,#b9d7f7)"></div>
<div class="a" style="left:0;top:567.6px;width:1167px;height:1.4px;background:rgba(60,150,235,0.6)"></div></body></html>
